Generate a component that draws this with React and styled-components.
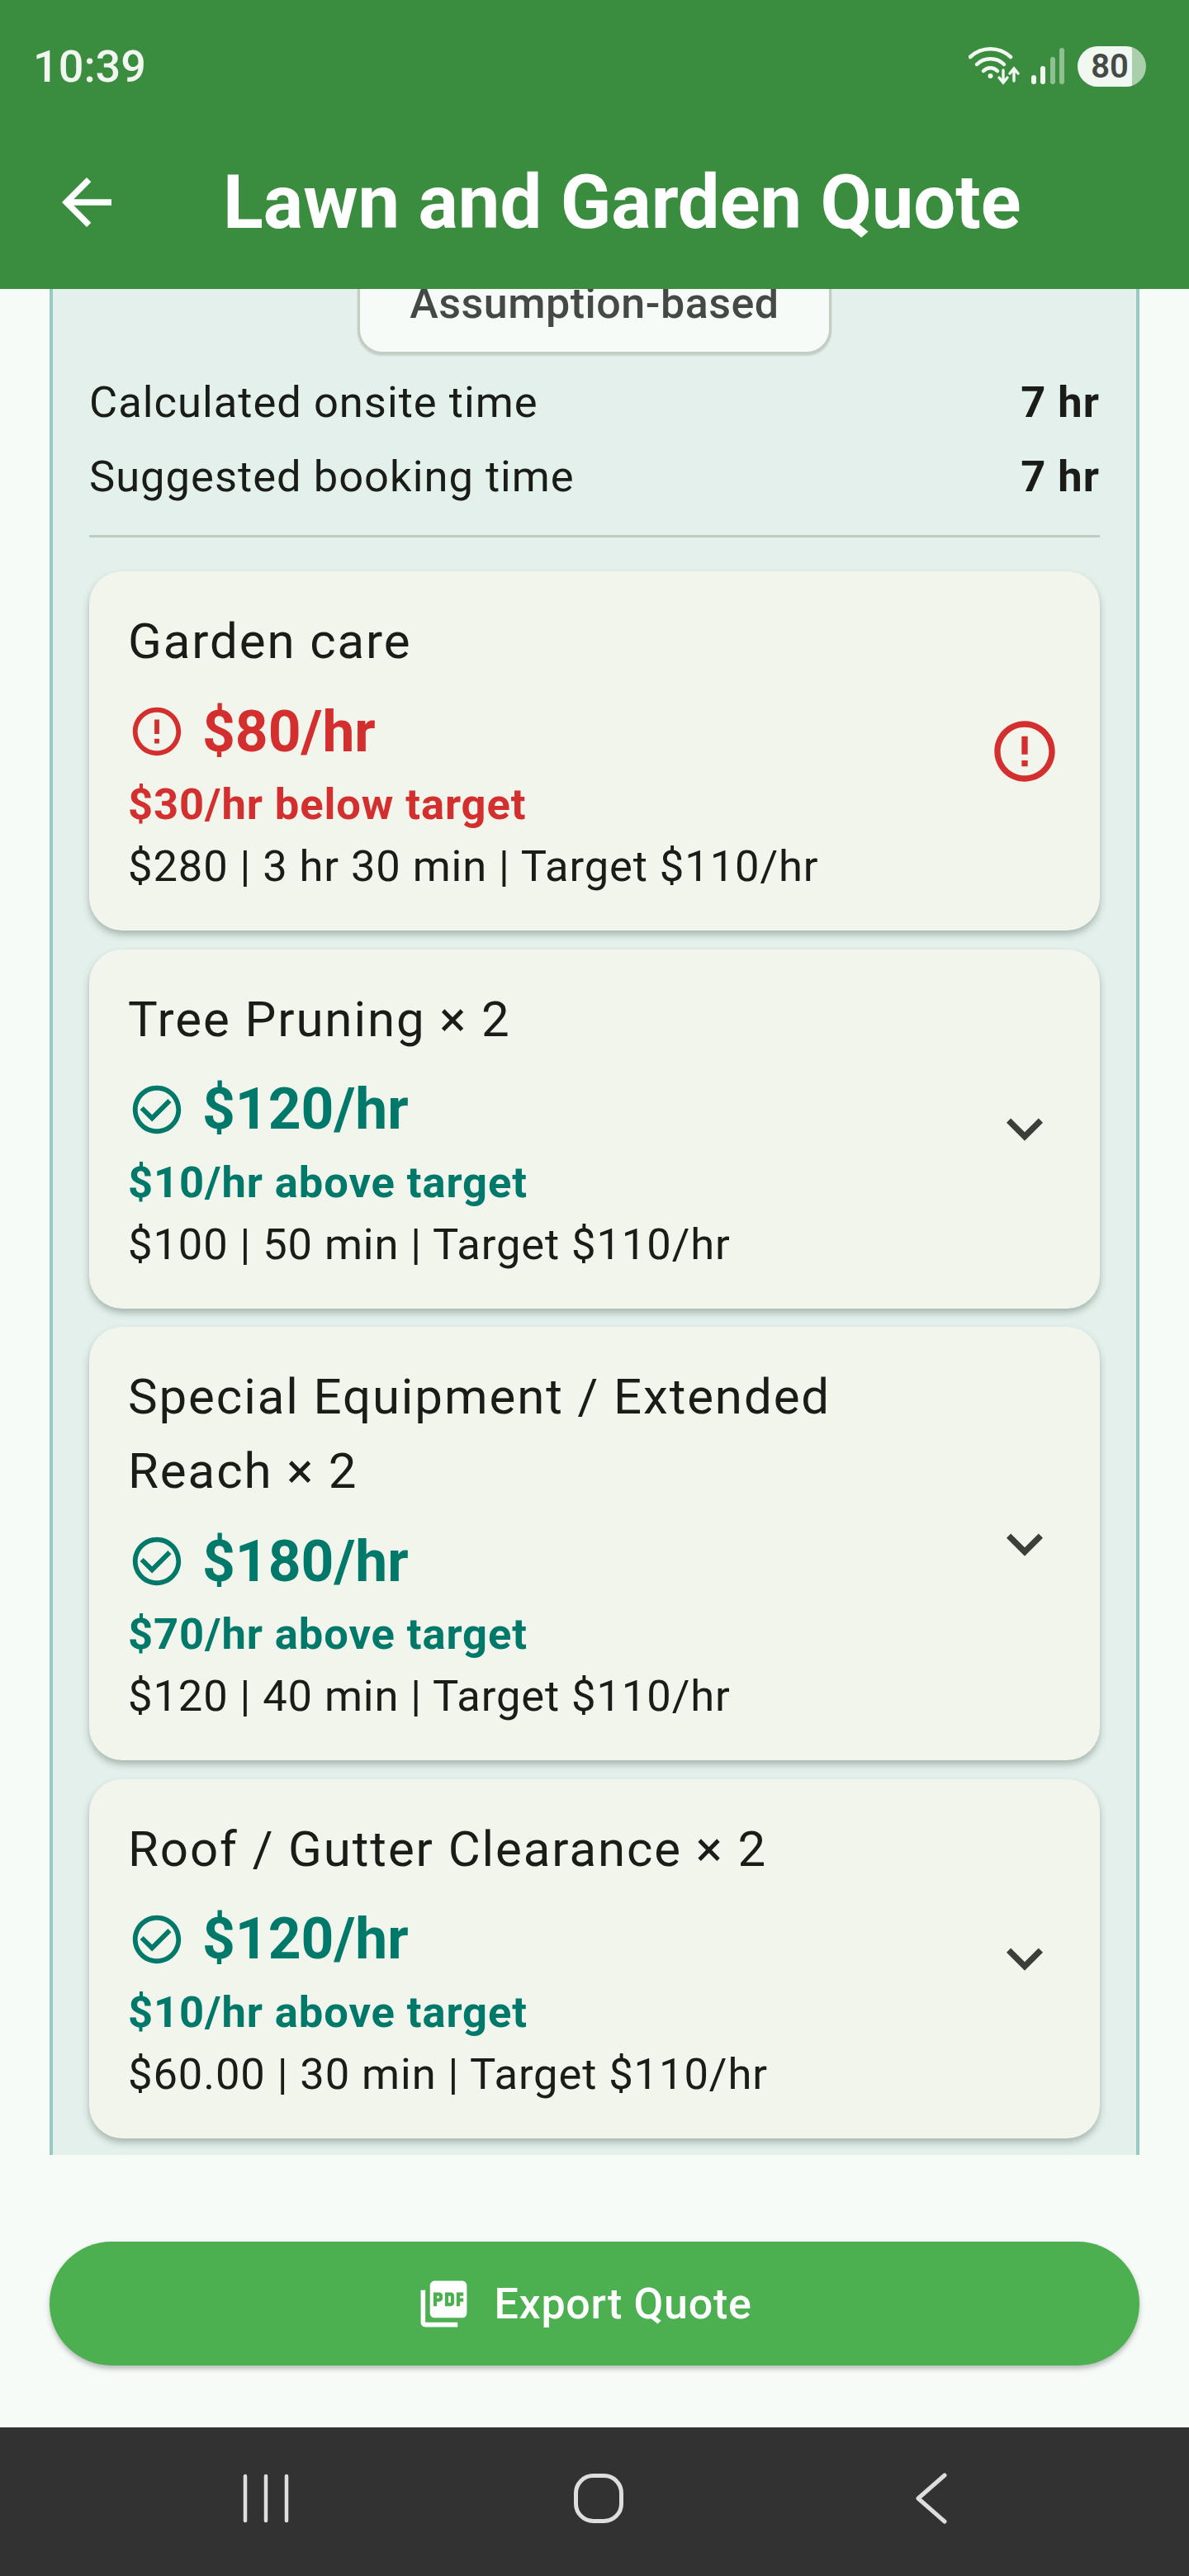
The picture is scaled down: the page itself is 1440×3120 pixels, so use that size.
import styled, { createGlobalStyle } from 'styled-components'
import {
  MdArrowBack,
  MdCheckCircleOutline,
  MdErrorOutline,
  MdExpandMore,
  MdPictureAsPdf,
} from 'react-icons/md'

const GlobalStyle = createGlobalStyle`
  html, body {
    margin: 0;
    padding: 0;
    background: #f6fbf7;
  }
  * {
    box-sizing: border-box;
  }
`

const Screen = styled.div`
  width: 1440px;
  height: 3120px;
  display: flex;
  flex-direction: column;
  overflow: hidden;
  background: #f6fbf7;
  font-family: Roboto, "Liberation Sans", sans-serif;
  color: #1a1c18;
`

const Header = styled.header`
  flex: none;
  height: 350px;
  background: #3a8c3f;
  color: #fff;
`

const StatusBar = styled.div`
  height: 160px;
  display: flex;
  align-items: center;
  justify-content: space-between;
  padding: 0 52px 0 40px;
`

const Clock = styled.span`
  font-size: 54px;
  font-weight: 500;
  color: #f1f7f0;
`

const StatusIcons = styled.div`
  display: flex;
  align-items: center;
  gap: 14px;
`

const Battery = styled.span`
  width: 83px;
  height: 49px;
  border-radius: 25px;
  display: flex;
  align-items: center;
  justify-content: center;
  padding-right: 5px;
  background: linear-gradient(to right, #f1f8f2 80%, #a9cfab 80%);
  color: #454a46;
  font-size: 40px;
  font-weight: 600;
`

const AppBar = styled.div`
  height: 170px;
  display: flex;
  align-items: center;
  padding: 0 0 0 60px;
`

const BackIcon = styled(MdArrowBack)`
  flex: none;
  width: 90px;
  height: 90px;
`

const Title = styled.h1`
  margin: 0 0 0 120px;
  font-size: 90.3px;
  font-weight: 700;
  line-height: 1;
`

const Scroller = styled.main`
  flex: none;
  height: 2260px;
  overflow: hidden;
  padding: 0 60px;
`

const Panel = styled.section`
  margin-top: -45px;
  padding: 0 44px 60px;
  display: flex;
  flex-direction: column;
  background: #e4f0ec;
  border: solid #98cac3;
  border-width: 0 4px;
`

const Pill = styled.div`
  align-self: center;
  width: 574px;
  height: 124px;
  display: flex;
  align-items: center;
  justify-content: center;
  background: #f6fbf7;
  border: 3px solid #c3cdc2;
  border-radius: 30px;
  box-shadow: 0 2px 2px rgba(60, 70, 60, 0.18);
  color: #444946;
  font-size: 52px;
  font-weight: 500;
  letter-spacing: 0.5px;
`

const Summary = styled.div`
  margin-top: 13px;
  display: flex;
  flex-direction: column;
`

const SummaryRow = styled.div`
  height: 90px;
  display: flex;
  align-items: center;
  justify-content: space-between;
  font-size: 52.5px;
  letter-spacing: 1px;
`

const SummaryValue = styled.strong`
  font-weight: 700;
`

const Divider = styled.hr`
  height: 3px;
  margin: 26px 0 41px;
  border: 0;
  background: #bccdc2;
`

const CardList = styled.div`
  display: flex;
  flex-direction: column;
  gap: 22.5px;
`

const Card = styled.article`
  display: flex;
  align-items: center;
  justify-content: space-between;
  padding: 40px 47px 40px 47px;
  background: #f2f5ec;
  border-radius: 40px;
  box-shadow: 0 5px 8px rgba(50, 70, 60, 0.34);
`

const CardBody = styled.div`
  width: 960px;
`

const CardTitle = styled.h2`
  margin: 0;
  font-size: 60px;
  font-weight: 400;
  line-height: 90px;
  letter-spacing: 1.9px;
`

const Rate = styled.div`
  height: 88px;
  margin-top: 20px;
  display: flex;
  align-items: center;
  gap: 20px;
  color: ${(p) => p.$color};
  font-size: 69.5px;
  font-weight: 700;
`

const Difference = styled.div`
  margin-top: 9px;
  color: ${(p) => p.$color};
  font-size: 52.5px;
  font-weight: 700;
  line-height: 70px;
  letter-spacing: 0.9px;
`

const Detail = styled.div`
  margin-top: 2px;
  font-size: 52.5px;
  line-height: 76px;
  letter-spacing: 0.9px;
`

const CardAction = styled.div`
  flex: none;
  width: 88px;
  height: 88px;
  display: flex;
  align-items: center;
  justify-content: center;
  color: ${(p) => p.$color};
`

const Footer = styled.footer`
  flex: none;
  height: 330px;
  padding: 105px 60px 75px;
`

const ExportButton = styled.button`
  width: 100%;
  height: 150px;
  display: flex;
  align-items: center;
  justify-content: center;
  gap: 28px;
  padding: 0 26px 0 0;
  border: 0;
  border-radius: 75px;
  background: #4caf50;
  box-shadow: 0 4px 6px rgba(0, 0, 0, 0.25);
  color: #fff;
  font-family: inherit;
  font-size: 52px;
  font-weight: 500;
  letter-spacing: 0.7px;
`

const NavBar = styled.nav`
  flex: none;
  height: 180px;
  display: grid;
  grid-template-columns: repeat(3, 403px);
  justify-content: center;
  align-items: center;
  justify-items: center;
  padding: 0 0 8px 10px;
  background: #323232;
`

const RED = '#d32f2f'
const TEAL = '#00796b'

const cards = [
  {
    title: 'Garden care',
    rate: '$80/hr',
    difference: '$30/hr below target',
    detail: '$280 | 3 hr 30 min | Target $110/hr',
    below: true,
  },
  {
    title: 'Tree Pruning × 2',
    rate: '$120/hr',
    difference: '$10/hr above target',
    detail: '$100 | 50 min | Target $110/hr',
  },
  {
    title: 'Special Equipment / Extended Reach × 2',
    rate: '$180/hr',
    difference: '$70/hr above target',
    detail: '$120 | 40 min | Target $110/hr',
  },
  {
    title: 'Roof / Gutter Clearance × 2',
    rate: '$120/hr',
    difference: '$10/hr above target',
    detail: '$60.00 | 30 min | Target $110/hr',
  },
]

const WifiIcon = () => (
  <svg width="62" height="46" viewBox="0 0 62 46" fill="none" stroke="#f1f8f2" strokeWidth="4.5" strokeLinecap="round">
    <path d="M2 12C16 -1 37 -1 51 12" />
    <path d="M10 21C19 12 34 12 43 21" />
    <path d="M18 29C23 24 30 24 35 29" />
    <circle cx="26.5" cy="35" r="3" fill="#f1f8f2" stroke="none" />
    <path d="M42 28V42M37 37L42 43L47 37" strokeWidth="3.4" />
    <path d="M55 41V27M50 32L55 26L60 32" strokeWidth="3.4" />
  </svg>
)

const SignalIcon = () => (
  <svg width="42" height="44" viewBox="0 0 42 44">
    <rect x="0" y="33" width="6" height="11" rx="3" fill="#f1f8f2" />
    <rect x="11" y="22" width="6" height="22" rx="3" fill="#f1f8f2" />
    <rect x="23" y="11" width="6" height="33" rx="3" fill="#8fc093" />
    <rect x="34" y="0" width="6" height="44" rx="3" fill="#8fc093" />
  </svg>
)

const RecentsIcon = () => (
  <svg width="60" height="60" viewBox="0 0 60 60" stroke="#dedede" strokeWidth="4.5" strokeLinecap="round">
    <path d="M5 3V57M30 3V57M55 3V57" />
  </svg>
)

const HomeIcon = () => (
  <svg width="60" height="60" viewBox="0 0 60 60" fill="none" stroke="#dedede" strokeWidth="5">
    <rect x="2.5" y="2.5" width="55" height="55" rx="21" />
  </svg>
)

const BackNavIcon = () => (
  <svg width="40" height="62" viewBox="0 0 40 62" fill="none" stroke="#dedede" strokeWidth="5" strokeLinecap="round" strokeLinejoin="round">
    <path d="M36 3L4 31L36 59" />
  </svg>
)

const QuoteCard = ({ title, rate, difference, detail, below }) => {
  const color = below ? RED : TEAL
  const StatusIcon = below ? MdErrorOutline : MdCheckCircleOutline
  return (
    <Card>
      <CardBody>
        <CardTitle>{title}</CardTitle>
        <Rate $color={color}>
          <StatusIcon size={70} />
          {rate}
        </Rate>
        <Difference $color={color}>{difference}</Difference>
        <Detail>{detail}</Detail>
      </CardBody>
      <CardAction $color={below ? RED : '#3a3f3a'}>
        {below ? <MdErrorOutline size={88} /> : <MdExpandMore size={88} />}
      </CardAction>
    </Card>
  )
}

const App = () => (
  <Screen>
    <GlobalStyle />
    <Header>
      <StatusBar>
        <Clock>10:39</Clock>
        <StatusIcons>
          <WifiIcon />
          <SignalIcon />
          <Battery>80</Battery>
        </StatusIcons>
      </StatusBar>
      <AppBar>
        <BackIcon />
        <Title>Lawn and Garden Quote</Title>
      </AppBar>
    </Header>
    <Scroller>
      <Panel>
        <Pill>Assumption-based</Pill>
        <Summary>
          <SummaryRow>
            Calculated onsite time
            <SummaryValue>7 hr</SummaryValue>
          </SummaryRow>
          <SummaryRow>
            Suggested booking time
            <SummaryValue>7 hr</SummaryValue>
          </SummaryRow>
        </Summary>
        <Divider />
        <CardList>
          {cards.map((card) => (
            <QuoteCard key={card.title} {...card} />
          ))}
        </CardList>
      </Panel>
    </Scroller>
    <Footer>
      <ExportButton>
        <MdPictureAsPdf size={67} />
        Export Quote
      </ExportButton>
    </Footer>
    <NavBar>
      <RecentsIcon />
      <HomeIcon />
      <BackNavIcon />
    </NavBar>
  </Screen>
)

export default App
